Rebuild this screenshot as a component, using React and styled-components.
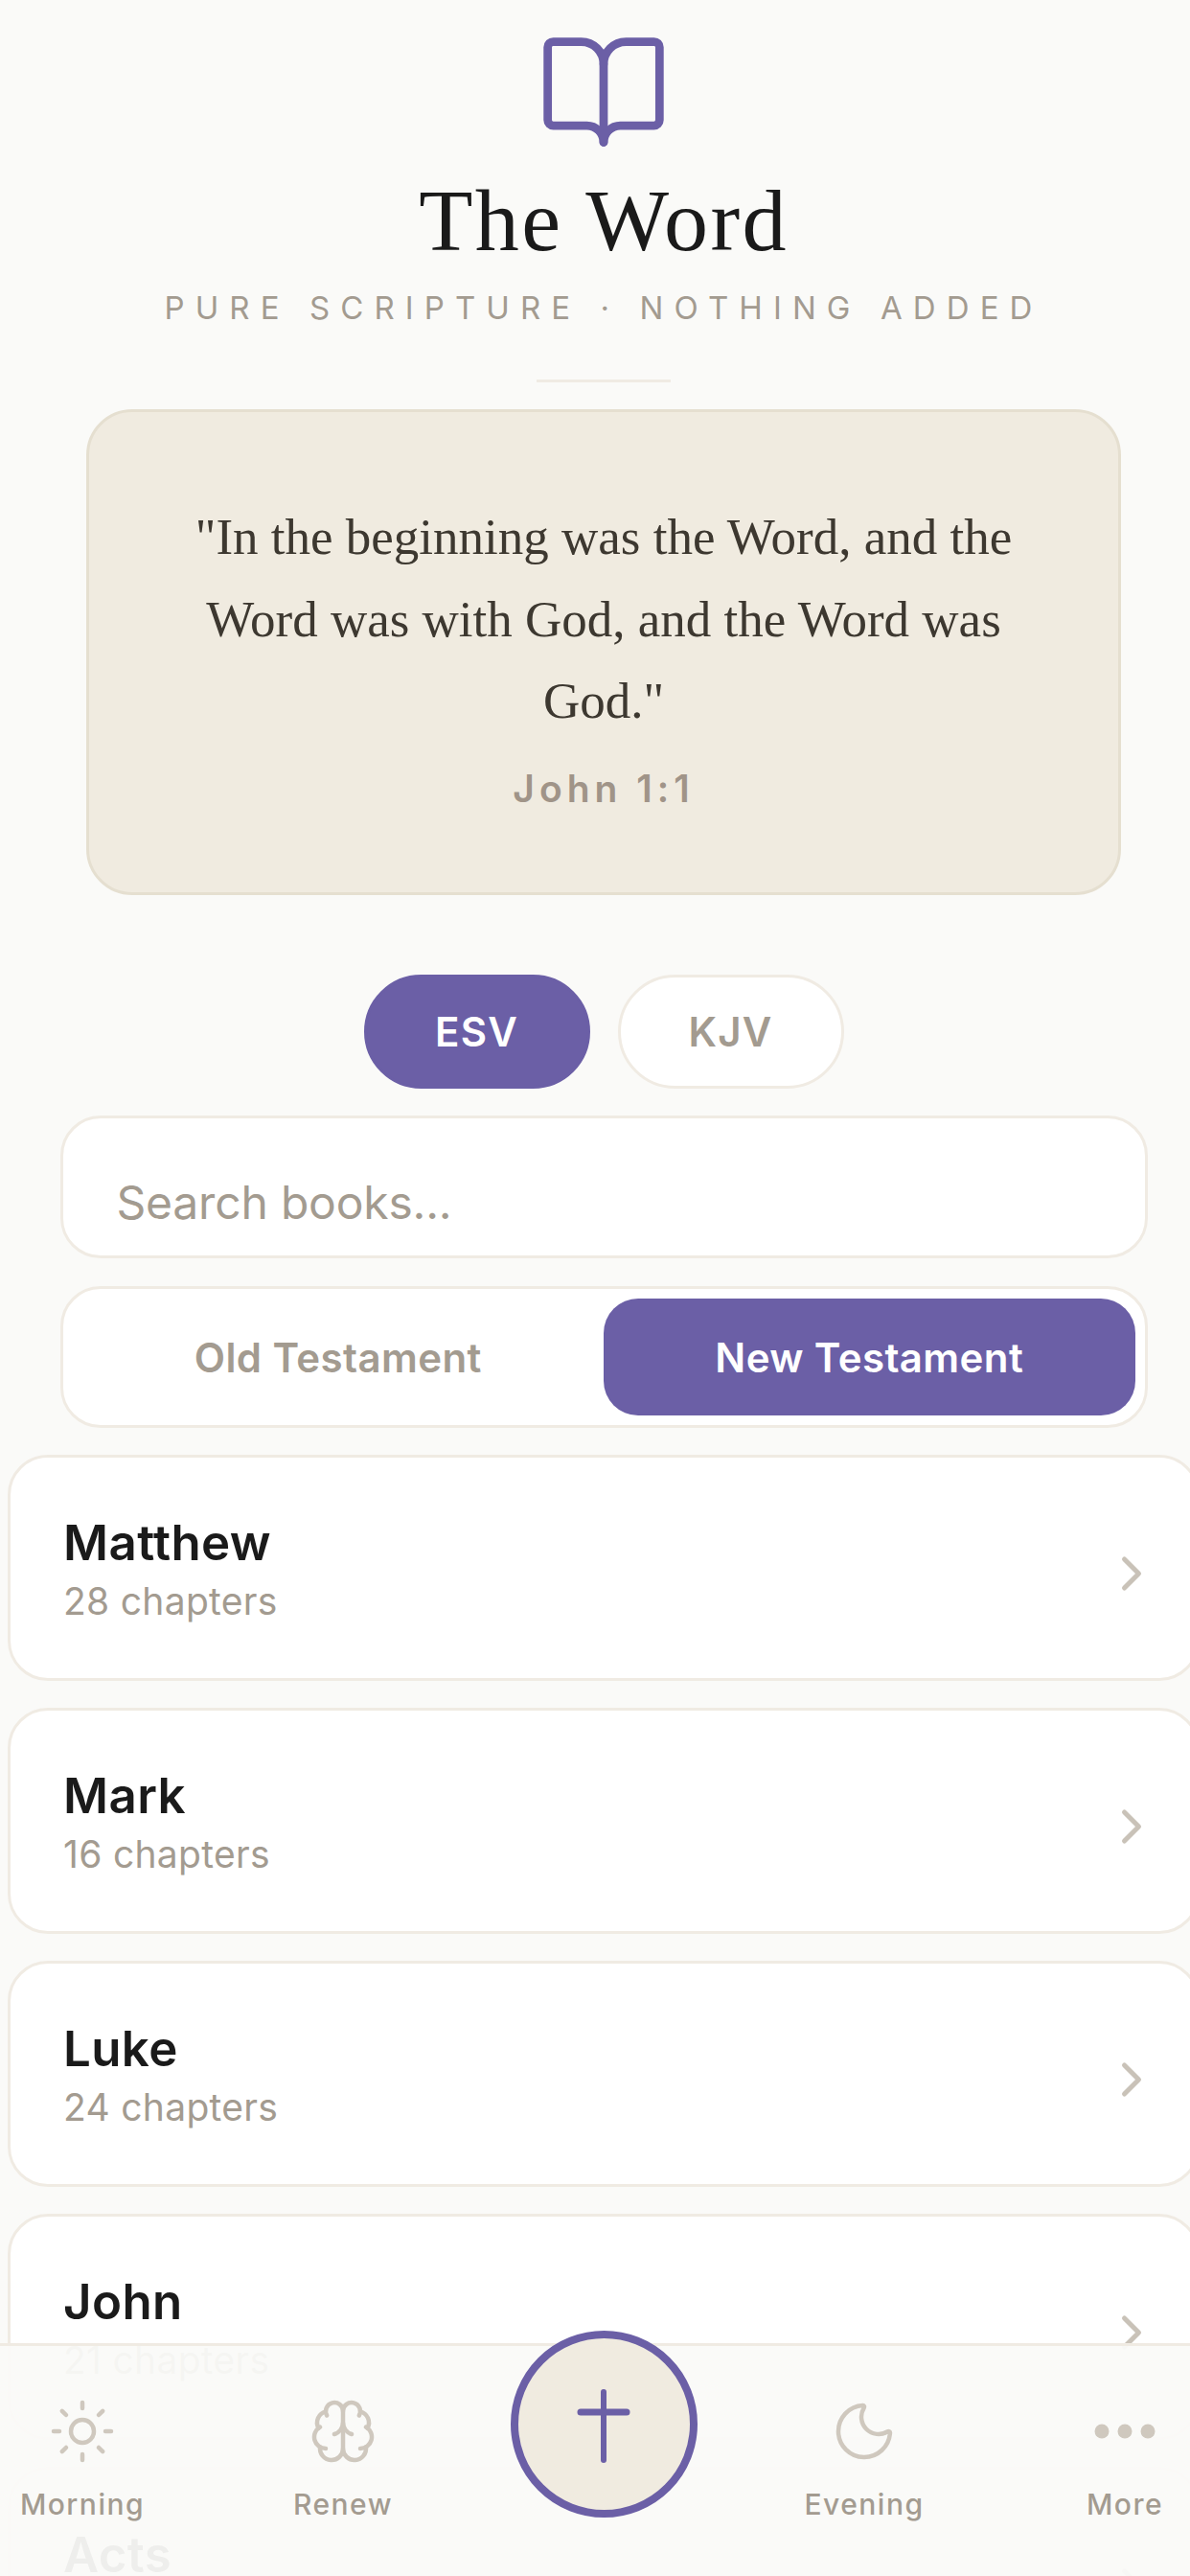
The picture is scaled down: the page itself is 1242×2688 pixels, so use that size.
import styled, { createGlobalStyle } from 'styled-components';
import { Sun, Brain, Moon, ChevronRight } from 'lucide-react';

const PURPLE = '#6b5fa6';
const SAND = '#f0ebe0';
const LINE = '#f0ebe3';
const MUTED = '#a39b90';
const SANS = 'Inter, "Liberation Sans", sans-serif';
const SERIF = '"Liberation Serif", serif';

const books = [
  { name: 'Matthew', chapters: 28 },
  { name: 'Mark', chapters: 16 },
  { name: 'Luke', chapters: 24 },
  { name: 'John', chapters: 21 },
  { name: 'Acts', chapters: 28 },
];

const GlobalStyle = createGlobalStyle`
  html, body {
    margin: 0;
    height: 2688px;
    overflow: hidden;
    background: #fafaf8;
  }
`;

const Page = styled.div`
  position: relative;
  width: 1260px;
  height: 2688px;
  overflow: hidden;
  font-family: ${SANS};
  background: #fafaf8;
`;

const Header = styled.header`
  display: flex;
  flex-direction: column;
  align-items: center;
  padding-top: 26px;
`;

const Title = styled.h1`
  margin: 9px 0 0;
  font-family: ${SERIF};
  font-weight: 400;
  font-size: 92px;
  line-height: 110px;
  letter-spacing: 2.4px;
  color: #1a1a1a;
`;

const Tagline = styled.div`
  margin-top: 16px;
  font-size: 33px;
  line-height: 40px;
  letter-spacing: 11.1px;
  color: ${MUTED};
`;

const Divider = styled.div`
  width: 140px;
  height: 3px;
  margin-top: 55px;
  background: ${LINE};
`;

const QuoteCard = styled.section`
  box-sizing: border-box;
  width: 1080px;
  height: 507px;
  margin: 28px auto 0;
  padding: 88px 90px 0;
  text-align: center;
  background: ${SAND};
  border: 3px solid #e5dfd0;
  border-radius: 48px;
`;

const QuoteText = styled.p`
  margin: 0;
  font-family: ${SERIF};
  font-size: 53px;
  line-height: 85.5px;
  color: #3d3830;
`;

const QuoteRef = styled.div`
  margin-top: 24px;
  font-size: 39px;
  line-height: 48px;
  font-weight: 600;
  letter-spacing: 5px;
  color: #a09488;
`;

const VersionRow = styled.div`
  display: flex;
  justify-content: center;
  gap: 29px;
  margin-top: 83px;
`;

const VersionButton = styled.button`
  box-sizing: border-box;
  width: 236px;
  height: 119px;
  padding: 0;
  font-family: ${SANS};
  font-size: 42px;
  font-weight: 600;
  letter-spacing: 1.2px;
  color: ${(p) => (p.$active ? '#fff' : MUTED)};
  background: ${(p) => (p.$active ? PURPLE : '#fff')};
  border: 3px solid ${(p) => (p.$active ? PURPLE : LINE)};
  border-radius: 60px;
`;

const Search = styled.div`
  box-sizing: border-box;
  display: flex;
  align-items: flex-end;
  width: 1135px;
  height: 149px;
  margin: 28px auto 0;
  padding: 0 58px 26px 56px;
  font-size: 48px;
  line-height: 58px;
  letter-spacing: -0.2px;
  color: ${MUTED};
  background: #fff;
  border: 3px solid ${LINE};
  border-radius: 42px;
`;

const TestamentToggle = styled.div`
  box-sizing: border-box;
  display: grid;
  grid-template-columns: 1fr 1fr;
  width: 1135px;
  height: 148px;
  margin: 29px auto 0;
  padding: 10px;
  background: #fff;
  border: 3px solid ${LINE};
  border-radius: 42px;
`;

const TestamentTab = styled.div`
  display: flex;
  align-items: center;
  justify-content: center;
  font-size: 42px;
  font-weight: 600;
  letter-spacing: 0.4px;
  color: ${(p) => (p.$active ? '#fff' : MUTED)};
  background: ${(p) => (p.$active ? PURPLE : 'transparent')};
  border-radius: 36px;
`;

const BookList = styled.div`
  display: flex;
  flex-direction: column;
  gap: 28px;
  margin: 28px 8px 0;
`;

const BookCard = styled.div`
  box-sizing: border-box;
  display: flex;
  align-items: center;
  justify-content: space-between;
  height: 236px;
  padding: 0 38px 0 55px;
  background: #fff;
  border: 3px solid ${LINE};
  border-radius: 42px;
`;

const BookName = styled.div`
  font-size: 51px;
  line-height: 62px;
  font-weight: 600;
  letter-spacing: 0.4px;
  color: #1a1a1a;
`;

const BookChapters = styled.div`
  margin-top: 7px;
  font-size: 39px;
  line-height: 46px;
  letter-spacing: 0.3px;
  color: ${MUTED};
`;

const Chevron = styled(ChevronRight)`
  margin-top: 12px;
  color: #c9c2b8;
`;

const Nav = styled.nav`
  position: absolute;
  left: 0;
  right: 0;
  bottom: 0;
  box-sizing: border-box;
  display: flex;
  justify-content: space-between;
  height: 243px;
  padding-top: 53px;
  background: rgba(250, 250, 248, 0.95);
  border-top: 3px solid ${LINE};
`;

const NavItem = styled.div`
  display: flex;
  flex-direction: column;
  align-items: center;
  width: 172px;
  color: #cfc8be;
`;

const NavLabel = styled.div`
  margin-top: 22px;
  font-size: 30px;
  line-height: 36px;
  font-weight: 500;
  letter-spacing: 1.5px;
  color: ${MUTED};
`;

const CrossSlot = styled.div`
  display: flex;
  justify-content: center;
  width: 172px;
`;

const CrossButton = styled.div`
  box-sizing: border-box;
  flex-shrink: 0;
  display: flex;
  align-items: center;
  justify-content: center;
  width: 195px;
  height: 195px;
  margin-top: -69px;
  background: ${SAND};
  border: 8px solid ${PURPLE};
  border-radius: 50%;
`;

function BookIcon() {
  return (
    <svg width="140" height="140" viewBox="0 0 24 24" fill="none" stroke={PURPLE} strokeWidth="1.5" strokeLinecap="round" strokeLinejoin="round">
      <path d="M12 7v14" />
      <path d="M3 18a1 1 0 0 1-1-1V4a1 1 0 0 1 1-1h5a4 4 0 0 1 4 4 4 4 0 0 1 4-4h5a1 1 0 0 1 1 1v13a1 1 0 0 1-1 1h-6a3 3 0 0 0-3 3 3 3 0 0 0-3-3z" />
    </svg>
  );
}

function CrossIcon() {
  return (
    <svg width="72" height="96" viewBox="0 0 72 96" fill="none" stroke={PURPLE} strokeLinecap="round">
      <path d="M36 14v71" strokeWidth="6" />
      <path d="M12 35h48" strokeWidth="7" />
    </svg>
  );
}

function DotsIcon() {
  return (
    <svg width="72" height="72" viewBox="0 0 72 72" fill="currentColor">
      <circle cx="12" cy="36" r="7.5" />
      <circle cx="36" cy="36" r="7.5" />
      <circle cx="60" cy="36" r="7.5" />
    </svg>
  );
}

export default function App() {
  return (
    <Page>
      <GlobalStyle />
      <Header>
        <BookIcon />
        <Title>The Word</Title>
        <Tagline>PURE SCRIPTURE · NOTHING ADDED</Tagline>
        <Divider />
      </Header>

      <QuoteCard>
        <QuoteText>"In the beginning was the Word, and the Word was with God, and the Word was God."</QuoteText>
        <QuoteRef>John 1:1</QuoteRef>
      </QuoteCard>

      <VersionRow>
        <VersionButton $active>ESV</VersionButton>
        <VersionButton>KJV</VersionButton>
      </VersionRow>

      <Search>Search books...</Search>

      <TestamentToggle>
        <TestamentTab>Old Testament</TestamentTab>
        <TestamentTab $active>New Testament</TestamentTab>
      </TestamentToggle>

      <BookList>
        {books.map((book) => (
          <BookCard key={book.name}>
            <div>
              <BookName>{book.name}</BookName>
              <BookChapters>{book.chapters} chapters</BookChapters>
            </div>
            <Chevron size={60} strokeWidth={2} />
          </BookCard>
        ))}
      </BookList>

      <Nav>
        <NavItem>
          <Sun size={72} strokeWidth={1.5} />
          <NavLabel>Morning</NavLabel>
        </NavItem>
        <NavItem>
          <Brain size={72} strokeWidth={1.5} />
          <NavLabel>Renew</NavLabel>
        </NavItem>
        <CrossSlot>
          <CrossButton>
            <CrossIcon />
          </CrossButton>
        </CrossSlot>
        <NavItem>
          <Moon size={72} strokeWidth={1.5} />
          <NavLabel>Evening</NavLabel>
        </NavItem>
        <NavItem>
          <DotsIcon />
          <NavLabel>More</NavLabel>
        </NavItem>
      </Nav>
    </Page>
  );
}
